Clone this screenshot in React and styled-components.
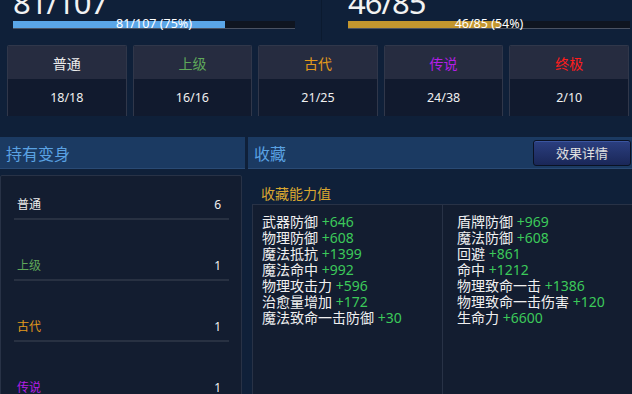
import React from 'react'
import styled, { createGlobalStyle } from 'styled-components'

const GlobalStyle = createGlobalStyle`
  body {
    margin: 0;
    background: #0f2039;
    font-family: "Noto Sans", "Noto Sans CJK SC", sans-serif;
    overflow: hidden;
  }
`

const grades = [
  { name: '普通', color: '#ececec', count: '18/18', own: 6 },
  { name: '上级', color: '#5fa85a', count: '16/16', own: 1 },
  { name: '古代', color: '#e39a1c', count: '21/25', own: 1 },
  { name: '传说', color: '#b41ee6', count: '24/38', own: 1 },
  { name: '终极', color: '#ff1c1c', count: '2/10', own: 0 },
]

const leftStats = [
  ['武器防御', '+646'],
  ['物理防御', '+608'],
  ['魔法抵抗', '+1399'],
  ['魔法命中', '+992'],
  ['物理攻击力', '+596'],
  ['治愈量增加', '+172'],
  ['魔法致命一击防御', '+30'],
]

const rightStats = [
  ['盾牌防御', '+969'],
  ['魔法防御', '+608'],
  ['回避', '+861'],
  ['命中', '+1212'],
  ['物理致命一击', '+1386'],
  ['物理致命一击伤害', '+120'],
  ['生命力', '+6600'],
]

function App() {
  return (
    <Page>
      <GlobalStyle />
      <Top>
        <Gauge $pad={13}>
          <Big>81/107</Big>
          <Bar>
            <Fill $color="#5aa6e8" style={{ width: '75%' }} />
            <BarText>81/107 (75%)</BarText>
          </Bar>
        </Gauge>
        <Gauge $pad={26} $divider>
          <Big>46/85</Big>
          <Bar>
            <Fill $color="#c3962e" style={{ width: '54%' }} />
            <BarText>46/85 (54%)</BarText>
          </Bar>
        </Gauge>
      </Top>

      <Cards>
        {grades.map(g => (
          <Card key={g.name}>
            <CardHead $color={g.color}>{g.name}</CardHead>
            <CardBody>{g.count}</CardBody>
          </Card>
        ))}
      </Cards>

      <Main>
        <Side>
          <Header>持有变身</Header>
          <OwnPanel>
            {grades.slice(0, 4).map(g => (
              <OwnRow key={g.name}>
                <OwnName $color={g.color}>{g.name}</OwnName>
                <OwnValue>{g.own}</OwnValue>
              </OwnRow>
            ))}
          </OwnPanel>
        </Side>
        <Collection>
          <Header>
            收藏
            <DetailButton>效果详情</DetailButton>
          </Header>
          <SubTitle>收藏能力值</SubTitle>
          <StatBox>
            <StatCol>
              {leftStats.map(([k, v]) => (
                <Stat key={k}>{k} <Val>{v}</Val></Stat>
              ))}
            </StatCol>
            <StatCol $divider>
              {rightStats.map(([k, v]) => (
                <Stat key={k}>{k} <Val>{v}</Val></Stat>
              ))}
            </StatCol>
          </StatBox>
        </Collection>
      </Main>
    </Page>
  )
}

const Page = styled.div`
  width: 632px;
  height: 394px;
  overflow: hidden;
  color: #ececec;
`

const Top = styled.div`
  display: grid;
  grid-template-columns: 321px 1fr;
  height: 41px;
`

const Gauge = styled.div`
  padding: 0 3px 0 ${p => p.$pad}px;
  border-left: ${p => (p.$divider ? '1px solid #0b1a2f' : 'none')};
`

const Big = styled.div`
  margin-top: -16px;
  height: 37px;
  font-size: 31px;
  line-height: 36px;
  color: #f2f2f2;
  letter-spacing: -1px;
`

const Bar = styled.div`
  position: relative;
  width: 282px;
  height: 7px;
  background: #0f1520;
  border-bottom: 1px solid #4a5262;
`

const Fill = styled.div`
  height: 100%;
  background: ${p => p.$color};
`

const BarText = styled.div`
  position: absolute;
  inset: -4px 0 0 0;
  text-align: center;
  font-size: 12.5px;
  line-height: 14px;
  color: #fff;
`

const Cards = styled.div`
  display: grid;
  grid-template-columns: repeat(5, 1fr);
  gap: 6px;
  padding: 4px 3px 0 7px;
`

const Card = styled.div`
  border: 1px solid #30374a;
  border-bottom: none;
  border-radius: 2px 2px 0 0;
  overflow: hidden;
`

const CardHead = styled.div`
  height: 33px;
  display: flex;
  align-items: center;
  justify-content: center;
  background: #262c40;
  color: ${p => p.$color};
  font-size: 14px;
`

const CardBody = styled.div`
  height: 37px;
  display: flex;
  align-items: center;
  justify-content: center;
  background: #111a2e;
  font-size: 12.5px;
  color: #f0f0f0;
`

const Main = styled.div`
  display: grid;
  grid-template-columns: 245px 1fr;
  gap: 3px;
  margin-top: 21px;
`

const Side = styled.div``

const Header = styled.div`
  height: 31px;
  display: flex;
  align-items: center;
  justify-content: space-between;
  padding: 0 1px 0 6px;
  background: #1b3a62;
  border-bottom: 1px solid #2a4a74;
  color: #5aa2e2;
  font-size: 16px;
`

const OwnPanel = styled.div`
  margin: 6px 3px 0 0;
  height: 240px;
  background: #131d30;
  border: 1px solid #283246;
  border-radius: 2px;
  padding: 0 12px 0 13px;
`

const OwnRow = styled.div`
  height: 61px;
  display: flex;
  align-items: flex-end;
  justify-content: space-between;
  padding: 0 8px 5px 3px;
  border-bottom: 2px solid #283142;
  box-sizing: border-box;
  font-size: 12px;
  &:first-child {
    height: 44px;
  }
`

const OwnName = styled.span`
  color: ${p => p.$color};
`

const OwnValue = styled.span`
  color: #f0f0f0;
`

const Collection = styled.div``

const DetailButton = styled.button`
  width: 98px;
  height: 26px;
  background: linear-gradient(#2b3f80, #1a2758);
  border: 1px solid #0a1224;
  border-radius: 3px;
  box-shadow: inset 0 1px 0 #3b55a0;
  color: #e0e0e0;
  font-family: inherit;
  font-size: 13px;
`

const SubTitle = styled.div`
  padding: 14px 0 0 13px;
  height: 21px;
  font-size: 14px;
  color: #d9a630;
`

const StatBox = styled.div`
  display: grid;
  grid-template-columns: 189px 1fr;
  margin: 0 0 0 4px;
  height: 200px;
  background: #131d30;
  border: 1px solid #283246;
  border-right: none;
`

const StatCol = styled.div`
  padding: 9px 0 0 ${p => (p.$divider ? 14 : 9)}px;
  border-left: ${p => (p.$divider ? '1px solid #283246' : 'none')};
`

const Stat = styled.div`
  font-size: 14px;
  line-height: 16px;
  color: #f0f0f0;
  white-space: nowrap;
`

const Val = styled.span`
  color: #3cc95a;
`

export default App
